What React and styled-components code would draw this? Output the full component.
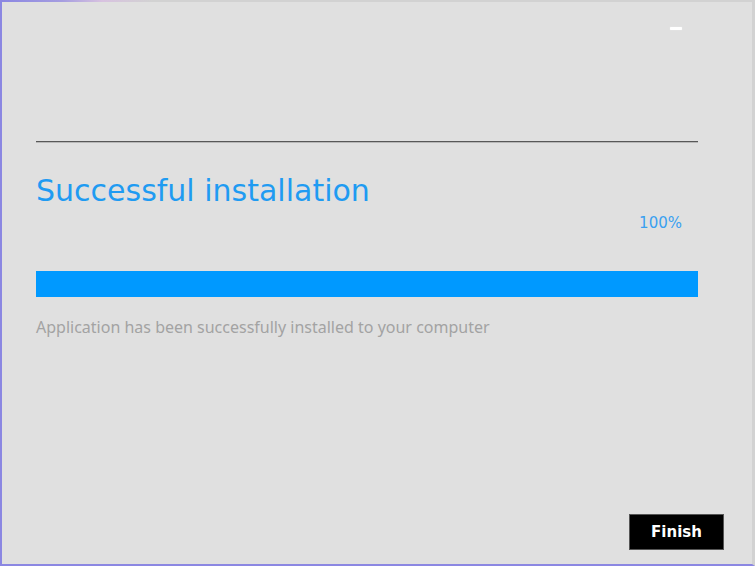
import React from "react";
import styled, { createGlobalStyle } from "styled-components";

const Global = createGlobalStyle`
  html, body { margin: 0; padding: 0; background: #e0e0e0; }
  * { box-sizing: border-box; }
`;

const Window = styled.div`
  width: 755px;
  height: 566px;
  background: #e0e0e0;
  border-left: 2px solid #8b87e2;
  border-bottom: 2px solid #8b87e2;
  border-right: 3px solid #d2d2d2;
  display: flex;
  flex-direction: column;
  font-family: "DejaVu Sans", Verdana, sans-serif;
`;

const TopEdge = styled.div`
  height: 2px;
  flex: none;
  background: linear-gradient(90deg, #8b87e2 0px, #a59de0 60px, #d8c2e0 100px, #d2d2d2 150px, #d2d2d2 100%);
`;

const Header = styled.div`
  height: 139px;
  flex: none;
  display: flex;
  justify-content: flex-end;
  align-items: flex-start;
  padding: 25px 70px 0 0;
`;

const Minimize = styled.button`
  width: 12px;
  height: 3px;
  padding: 0;
  border: none;
  border-radius: 1px;
  background: #ffffff;
  box-shadow: 0 0 1px #f4f4f4;
`;

const Content = styled.div`
  flex: 1;
  display: flex;
  flex-direction: column;
  padding: 0 54px 0 34px;
`;

const Divider = styled.hr`
  margin: 0;
  border: none;
  height: 1px;
  background: #585858;
  box-shadow: 0 1px 0 #b8b8b8;
`;

const Title = styled.h1`
  margin: 30px 0 0 0;
  font-family: "DejaVu Sans", Verdana, sans-serif;
  font-weight: normal;
  font-size: 30px;
  line-height: 38px;
  color: #1f9bf2;
`;

const Percent = styled.div`
  align-self: flex-end;
  margin: 4px 16px 0 0;
  font-size: 15px;
  line-height: 18px;
  color: #3aa0f0;
`;

const Bar = styled.div`
  margin-top: 39px;
  height: 26px;
  background: #d0d0d0;
`;

const Fill = styled.div`
  height: 100%;
  background: #0099ff;
`;

const Description = styled.p`
  margin: 20px 0 0 0;
  font-family: "Noto Sans", "Open Sans", sans-serif;
  font-size: 16px;
  line-height: 20px;
  letter-spacing: 0;
  color: #a3a3a3;
`;

const Footer = styled.div`
  margin-top: auto;
  display: flex;
  justify-content: flex-end;
  padding: 0 28px 14px 0;
`;

const FinishButton = styled.button`
  width: 95px;
  height: 36px;
  border: 1px solid #555;
  background: #000;
  color: #fff;
  font-family: "DejaVu Sans", Verdana, sans-serif;
  font-weight: bold;
  font-size: 15px;
  cursor: pointer;
`;

export default function App() {
  const progress = 100;
  return (
    <>
      <Global />
      <Window>
        <TopEdge />
        <Header>
          <Minimize aria-label="Minimize" />
        </Header>
        <Content>
          <Divider />
          <Title>Successful installation</Title>
          <Percent>{progress}%</Percent>
          <Bar>
            <Fill style={{ width: `${progress}%` }} />
          </Bar>
          <Description>Application has been successfully installed to your computer</Description>
        </Content>
        <Footer>
          <FinishButton>Finish</FinishButton>
        </Footer>
      </Window>
    </>
  );
}
